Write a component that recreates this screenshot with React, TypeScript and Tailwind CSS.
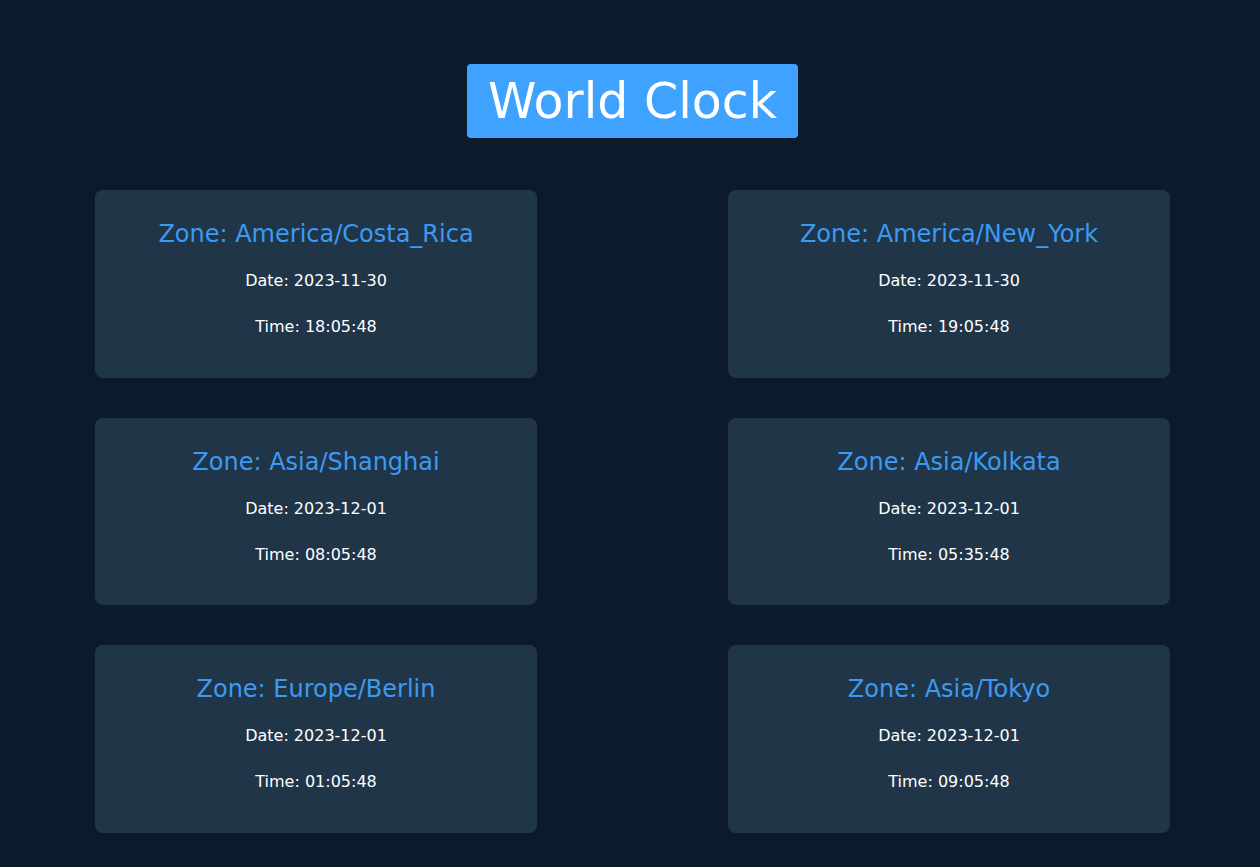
import React from "react";

const zones = [
  { zone: "America/Costa_Rica", date: "2023-11-30", time: "18:05:48" },
  { zone: "America/New_York", date: "2023-11-30", time: "19:05:48" },
  { zone: "Asia/Shanghai", date: "2023-12-01", time: "08:05:48" },
  { zone: "Asia/Kolkata", date: "2023-12-01", time: "05:35:48" },
  { zone: "Europe/Berlin", date: "2023-12-01", time: "01:05:48" },
  { zone: "Asia/Tokyo", date: "2023-12-01", time: "09:05:48" },
];

export default function App() {
  return (
    <div
      className="min-h-[867px] w-full bg-[#0b1b2b] text-white"
      style={{ fontFamily: '"DejaVu Sans", "Noto Sans", sans-serif' }}
    >
      <div className="flex justify-center pl-[5px] pt-[64px]">
        <h1 className="flex h-[74px] items-center rounded-[4px] bg-[#3fa2ff] px-[21px] text-[49px] leading-none text-white">
          World Clock
        </h1>
      </div>
      <div className="mx-[95px] mt-[52px] grid w-[1075px] grid-cols-[442px_442px] justify-between gap-y-[40px]">
        {zones.map((z) => (
          <div
            key={z.zone}
            className="flex h-[187.5px] flex-col items-center rounded-[8px] bg-[#213549] pt-[29px]"
          >
            <h2 className="text-[24px] leading-[30px] text-[#3b9bf2]">
              Zone: {z.zone}
            </h2>
            <p className="mt-[20px] text-[16px] leading-[24px]">
              Date: {z.date}
            </p>
            <p className="mt-[22px] text-[16px] leading-[24px]">
              Time: {z.time}
            </p>
          </div>
        ))}
      </div>
    </div>
  );
}
